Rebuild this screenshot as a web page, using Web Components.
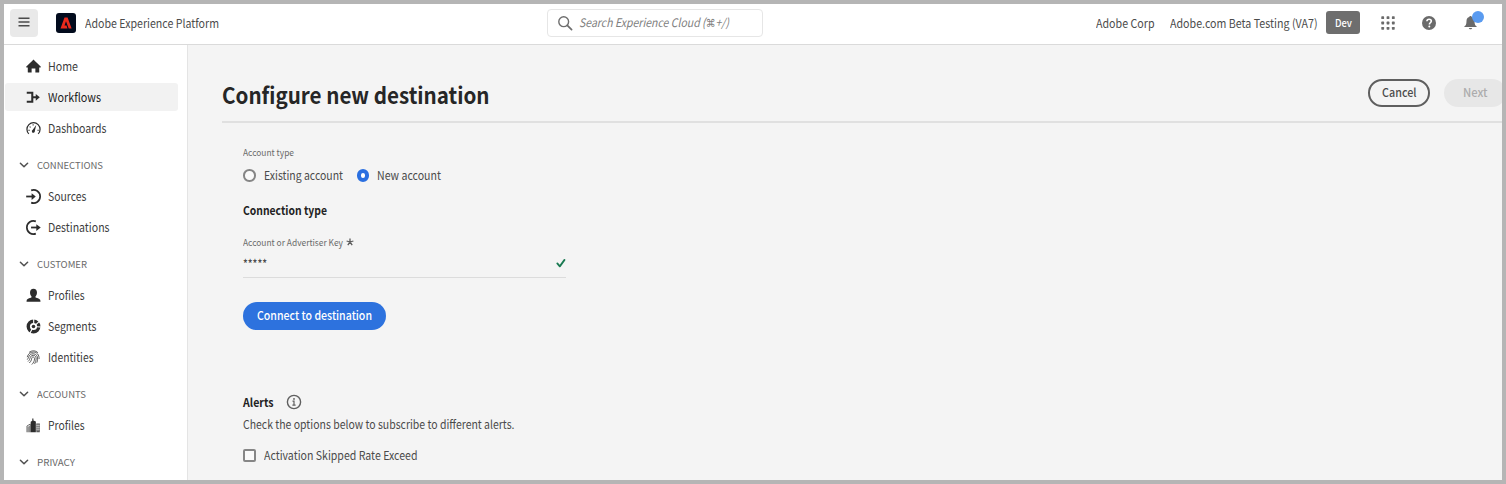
<!DOCTYPE html>
<html lang="en">
<head>
<meta charset="utf-8">
<title>Configure new destination</title>
<style>
html,body{margin:0;height:100%;overflow:hidden}
body{font-family:"Noto Sans CJK SC","Noto Sans",sans-serif;font-size:11.800px;color:#4a4a4a}
</style>
</head>
<body>
<xp-app></xp-app>
<script>
const define = (name, html, setup) => {
  const t = document.createElement('template');
  t.innerHTML = html;
  customElements.define(name, class extends HTMLElement {
    connectedCallback() {
      if (this.shadowRoot) return;
      this.attachShadow({mode: 'open'}).append(t.content.cloneNode(true));
      if (setup) setup(this, this.shadowRoot);
    }
  });
};

// One line of text, condensed to the measure given in "w".
define('xp-text', `<style>
:host{display:block;white-space:nowrap;line-height:20px;flex:none}
span{display:inline-block;transform-origin:0 50%}
</style><span><slot></slot></span>`, (el, root) => {
  const w = parseFloat(el.getAttribute('w'));
  const s = root.querySelector('span');
  if (!w) return;
  const natural = s.getBoundingClientRect().width;
  el.style.width = w + 'px';
  s.style.transform = `scaleX(${(w / natural).toFixed(4)})`;
});

const ICONS = {
  menu: [12, '<path d="M.5 2.200h11M.5 6h11M.5 9.800h11" stroke="currentColor" stroke-width="1.500"/>'],
  adobe: [20, '<rect width="20" height="20" rx="3" fill="#020b1d"/><path d="M4.500 15.400 8.500 4.600h3.100l4 10.800h-2.900L10 8.300l-1.500 4.200h2l1 2.900z" fill="#eb2a1c"/>'],
  search: [16, '<circle cx="6.700" cy="6.700" r="4.900" fill="none" stroke="currentColor" stroke-width="1.400"/><path d="m10.300 10.300 4.300 4.300" stroke="currentColor" stroke-width="1.700" stroke-linecap="round"/>'],
  apps: [14, [1.7, 7, 12.3].map(y => [1.7, 7, 12.3].map(x => `<rect x="${x-1.4}" y="${y-1.4}" width="2.800" height="2.800" rx=".6" fill="currentColor"/>`).join('')).join('')],
  help: [14, '<circle cx="7" cy="7" r="7" fill="currentColor"/><path d="M4.900 5.200C5 3.900 5.900 3.300 7.100 3.300c1.300 0 2.200.7 2.200 1.800 0 1.600-1.900 1.700-1.900 3.300" fill="none" stroke="#fff" stroke-width="1.600"/><circle cx="7.300" cy="10.500" r="1" fill="#fff"/>'],
  bell: [16, '<path d="M8 1c.8 0 1.300.5 1.300 1.200 2.100.6 3 2.300 3 4.600 0 3 .8 4.300 2.200 5.200v.9h-13V12c1.400-.9 2.200-2.200 2.200-5.200 0-2.300.9-4 3-4.600C6.700 1.500 7.200 1 8 1zM6.200 13.800h3.600c-.2 1-.9 1.500-1.800 1.500s-1.600-.5-1.800-1.500z" fill="currentColor"/>'],
  home: [16, '<path d="M8 .9c.3 0 .5.100.7.300l6.900 6.900c.5.500.3.900-.3.900h-1.200v4.900c0 .4-.2.600-.6.600H10V10H6v4.500H2.500c-.4 0-.6-.2-.6-.6V9H.7c-.6 0-.8-.4-.3-.9l6.900-6.900C7.500 1 7.700.9 8 .9z" fill="currentColor"/>'],
  flow: [16, '<path d="M.8 3h5.900v9.600H.8M6.500 7.800h5" fill="none" stroke="currentColor" stroke-width="2.200"/><path d="m10.400 4.200 4.300 3.600-4.300 3.600z" fill="currentColor"/>'],
  gauge: [16, '<path d="M3 13.700A7 7 0 1 1 13 13.700" fill="none" stroke="currentColor" stroke-width="1.300"/><path d="m10.900 4.300-1.500 6.300a1.600 1.600 0 1 1-2.400-1z" fill="currentColor"/><path d="M2.500 9.800h1.500M3.900 5.900l1 .9M7.600 3.400v1.300M12.200 9.800h1.400" stroke="currentColor" stroke-width="1.100"/>'],
  source: [16, '<path d="M5.500 1.500a7 7 0 1 1 0 13" fill="none" stroke="currentColor" stroke-width="1.800"/><path d="M.2 8H7" stroke="currentColor" stroke-width="1.900"/><path d="m6 4.400 4.400 3.600L6 11.600z" fill="currentColor"/>'],
  dest: [16, '<path d="M10.500 1.500a7 7 0 1 0 0 13" fill="none" stroke="currentColor" stroke-width="1.800"/><path d="M5.400 8H12" stroke="currentColor" stroke-width="1.900"/><path d="m11 4.400 4.700 3.600-4.700 3.600z" fill="currentColor"/>'],
  user: [16, '<path d="M8 .8c2.400 0 3.700 1.600 3.700 4 0 1.800-.6 3.100-1.400 4.100-.5.800-.2 1.400.5 1.600 2.900.7 4.600 1.700 4.600 3.400v.8H.6v-.8c0-1.700 1.700-2.700 4.600-3.400.7-.2 1-.8.500-1.600-.8-1-1.400-2.300-1.400-4.100C4.300 2.400 5.600.8 8 .8z" fill="currentColor"/>'],
  segments: [16, '<circle cx="8" cy="8" r="5.600" fill="none" stroke="currentColor" stroke-width="3.600"/><path d="M8.200 5V0M10.500 6l4.300-4M11 8.200l5 .4M6.600 10.500 4 15.500" stroke="#fff" stroke-width="1.200"/><circle cx="8" cy="8" r="1.900" fill="currentColor"/>'],
  finger: [16, '<g fill="none" stroke="currentColor" stroke-width=".8" stroke-linecap="round"><path d="M3.600 2.300C6.300.2 10.200.3 12.500 2.700M1.400 7.200C2.200 4 4.800 2.200 7.700 2.200c3.900 0 6.500 3 6.300 7M1.600 10c1.500-1.300.9-5.900 6.100-6 3.200 0 4.900 2.600 4.700 5.800-.1 1.200-.3 2.300-.7 3.300M2.500 12c2.500-2 1.100-6.200 5.200-6.300 2.200 0 3.200 1.800 3.100 4-.1 1.800-.6 3.400-1.400 4.700M3.800 13.600c2.500-2.200 1.900-4.200 2.500-5.500.6-1.100 2.700-.9 2.800 1.100 0 2.400-1 4.500-2.600 6"/></g>'],
  city: [16, '<path d="M5 15.200V3.900L6.700 2.800V.4h1.200v2.300l2.600.9v11.600z" fill="currentColor"/><path d="M11 5.800h3.700v9.400H11z" fill="currentColor" opacity=".8"/><path d="M11 8h3.600M11 10h3.600M11 12h3.600M12.800 6v8" stroke="#fff" stroke-width=".5"/><path d="M1 15.200V8.500l3.500-2v8.700M2.200 15.200V9.200M3.400 15.200V8.500" fill="none" stroke="currentColor" stroke-width=".7"/>'],
  chevron: [10, '<path d="m1.400 3.200 3.600 3.600 3.600-3.600" fill="none" stroke="currentColor" stroke-width="1.500" stroke-linecap="round" stroke-linejoin="round"/>'],
  check: [10, '<path d="m1.300 5.400 2.500 3 4.700-6.500" fill="none" stroke="#1a7a52" stroke-width="1.800" stroke-linecap="round" stroke-linejoin="round"/>'],
  star: [8, '<path d="M4 4V.5M4 4l3.400-1M4 4l2.200 3.100M4 4 1.800 7.100M4 4 .6 3" stroke="currentColor" stroke-width="1.300"/>'],
  info: [16, '<circle cx="8" cy="8" r="6.600" fill="none" stroke="currentColor" stroke-width="1.400"/><circle cx="8" cy="4.900" r=".95" fill="currentColor"/><path d="M6.500 7.200H8v3.900M6.400 11.200h3.200" fill="none" stroke="currentColor" stroke-width="1.200"/>']
};
define('xp-icon', `<style>:host{display:block;flex:none}svg{display:block}</style>`, (el, root) => {
  const [s, body] = ICONS[el.getAttribute('name')];
  const z = el.getAttribute('size') || s;
  root.innerHTML += `<svg width="${z}" height="${z}" viewBox="0 0 ${s} ${s}" aria-hidden="true">${body}</svg>`;
});

define('xp-header', `<style>
:host{display:flex;align-items:center;box-sizing:border-box;height:41px;background:#fff;border-bottom:1px solid #dadada;padding:0 24px 3px 6px;flex:none;color:#4b4b4b}
.menu{display:grid;place-items:center;width:28px;height:28px;border-radius:4px;background:#e9e9e9;margin-right:18px}
.menu xp-icon{margin-bottom:2px}
.brand{margin-left:9px}
.search{display:flex;align-items:center;box-sizing:border-box;width:216px;height:28px;border:1px solid #e6e6e6;border-radius:4px;margin-left:328px;padding-left:9px;gap:6px;color:#6e6e6e}
.search xp-text{font-style:italic;color:#808080}
.cmd{font-family:"DejaVu Sans",sans-serif;font-size:11px}
.right{display:flex;align-items:center;margin-left:auto}
.dev{box-sizing:border-box;width:34px;height:23px;border-radius:3px;background:#6e6e6e;color:#fff;margin:0 21px 0 9px;display:grid;place-items:center;font-size:10.500px;font-weight:500}
.icons{display:flex;align-items:center;gap:27px;color:#6a6a6a}
.bell{position:relative}
.bell i{position:absolute;left:9px;top:-4px;width:12px;height:12px;border-radius:50%;background:#5a9bf0}
</style>
<div class="menu"><xp-icon name="menu"></xp-icon></div>
<xp-icon name="adobe"></xp-icon>
<xp-text class="brand" w="134">Adobe Experience Platform</xp-text>
<div class="search"><xp-icon name="search"></xp-icon><xp-text w="150">Search Experience Cloud (<span class="cmd">⌘</span>+/)</xp-text></div>
<div class="right">
<xp-text w="58.500" style="margin-right:15px">Adobe Corp</xp-text>
<xp-text w="147.500">Adobe.com Beta Testing (VA7)</xp-text>
<div class="dev"><xp-text w="17">Dev</xp-text></div>
<div class="icons"><xp-icon name="apps"></xp-icon><xp-icon name="help"></xp-icon><div class="bell"><xp-icon name="bell" size="15"></xp-icon><i></i></div></div>
</div>`);

define('xp-nav-item', `<style>
:host{display:flex;align-items:center;height:31px;color:#3c3c3c}
div{display:flex;align-items:center;box-sizing:border-box;width:173px;height:28px;border-radius:3px;margin:-1px 0 0 1px;padding-left:21px;gap:7px}
:host([active]) div{background:#f2f2f2;color:#222}
xp-icon{color:#2c2c2c}
xp-text{margin-top:-1px}
</style><div></div>`, (el, root) => {
  root.querySelector('div').innerHTML = `<xp-icon name="${el.getAttribute('icon')}" size="15"></xp-icon><xp-text w="${el.getAttribute('w')}">${el.textContent}</xp-text>`;
});

define('xp-nav-heading', `<style>
:host{display:flex;align-items:center;box-sizing:border-box;height:37px;padding:5px 0 0 15px;gap:8px;font-size:9.500px;color:#6a6a6a}
xp-icon{color:#505050}
</style>`, (el, root) => {
  root.innerHTML += `<xp-icon name="chevron"></xp-icon><xp-text w="${el.getAttribute('w')}">${el.textContent}</xp-text>`;
});

define('xp-sidebar', `<style>
:host{display:block;box-sizing:border-box;width:184px;background:#fff;border-right:1px solid #e4e4e4;padding-top:6px;flex:none;overflow:hidden}
</style>
<xp-nav-item icon="home" w="30">Home</xp-nav-item>
<xp-nav-item icon="flow" w="53" active>Workflows</xp-nav-item>
<xp-nav-item icon="gauge" w="58.500">Dashboards</xp-nav-item>
<xp-nav-heading w="66">CONNECTIONS</xp-nav-heading>
<xp-nav-item icon="source" w="38.500">Sources</xp-nav-item>
<xp-nav-item icon="dest" w="61.500">Destinations</xp-nav-item>
<xp-nav-heading w="50">CUSTOMER</xp-nav-heading>
<xp-nav-item icon="user" w="36.500">Profiles</xp-nav-item>
<xp-nav-item icon="segments" w="48.500">Segments</xp-nav-item>
<xp-nav-item icon="finger" w="45.500">Identities</xp-nav-item>
<xp-nav-heading w="49">ACCOUNTS</xp-nav-heading>
<xp-nav-item icon="city" w="36.500">Profiles</xp-nav-item>
<xp-nav-heading w="38">PRIVACY</xp-nav-heading>`);

define('xp-button', `<style>
:host{display:grid;place-items:center;box-sizing:border-box;height:28px;border-radius:14px;flex:none;font-weight:500;padding-bottom:2px}
:host([kind=outline]){width:62px;border:2px solid #5f5f5f;color:#4b4b4b}
:host([kind=disabled]){width:62px;background:#e7e7e7;color:#acacac}
:host([kind=primary]){width:143px;background:#2d72de;color:#fff}
</style><slot></slot>`);

define('xp-choice', `<style>
:host{display:flex;align-items:center;gap:8px;height:20px}
i{box-sizing:border-box;width:12.500px;height:12.500px;border:2px solid #868686;border-radius:50%;background:#fafafa;flex:none;margin-top:-1px}
:host([checked]) i{border:4.500px solid #2a6fe0;background:#fff}
:host([square]) i{border-radius:2px}
::slotted(*){margin-top:-2px}
</style><i></i><slot></slot>`);

define('xp-main', `<style>
:host{display:block;flex:1;min-width:0;background:#f4f4f4;overflow:hidden;padding-left:34px}
.head{display:flex;align-items:flex-start;box-sizing:border-box;height:78px;border-bottom:2px solid #e0e0e0;padding-top:34px;overflow:hidden}
.head xp-text.title{font-size:22.500px;font-weight:700;color:#262626;line-height:32px;margin-top:-1px}
.actions{display:flex;gap:14px;margin-left:auto;margin-right:-4px}
.form{display:flex;flex-direction:column;align-items:flex-start;padding:19px 0 0 21px}
.small{font-size:9.200px;color:#6a6a6a}
.strong{font-weight:700;color:#222}
.radios{display:flex;gap:14px;margin:4px 0 14px}
.label{display:flex;align-items:center;gap:3px;margin-top:12px;color:#5c5c5c}
.field{display:flex;align-items:center;justify-content:space-between;box-sizing:border-box;width:323px;height:26px;border-bottom:1px solid #dcdcdc;padding-bottom:3px}
.alerts{display:flex;align-items:center;gap:12px;margin-top:62px;color:#5f5f5f}
</style>
<div class="head"><xp-text class="title" w="267.500">Configure new destination</xp-text>
<div class="actions"><xp-button kind="outline"><xp-text w="34.500">Cancel</xp-text></xp-button><xp-button kind="disabled"><xp-text w="24.500">Next</xp-text></xp-button></div></div>
<div class="form">
<xp-text class="small" w="51">Account type</xp-text>
<div class="radios"><xp-choice><xp-text w="79">Existing account</xp-text></xp-choice><xp-choice checked><xp-text w="64">New account</xp-text></xp-choice></div>
<xp-text class="strong" w="84">Connection type</xp-text>
<div class="label"><xp-text class="small" w="100">Account or Advertiser Key</xp-text><xp-icon name="star"></xp-icon></div>
<div class="field"><xp-text w="24" style="font-weight:500">*****</xp-text><xp-icon name="check"></xp-icon></div>
<xp-button kind="primary" style="margin-top:24px"><xp-text w="115">Connect to destination</xp-text></xp-button>
<div class="alerts"><xp-text class="strong" w="30.500">Alerts</xp-text><xp-icon name="info"></xp-icon></div>
<xp-text w="271.500" style="margin-top:2px">Check the options below to subscribe to different alerts.</xp-text>
<xp-choice square style="margin-top:12px"><xp-text w="153.500">Activation Skipped Rate Exceed</xp-text></xp-choice>
</div>`);

define('xp-app', `<style>
:host{display:flex;flex-direction:column;box-sizing:border-box;width:100vw;height:100vh;border:4px solid #b5b5b5;overflow:hidden}
.body{display:flex;flex:1;min-height:0}
</style><xp-header></xp-header><div class="body"><xp-sidebar></xp-sidebar><xp-main></xp-main></div>`);
</script>
</body>
</html>
